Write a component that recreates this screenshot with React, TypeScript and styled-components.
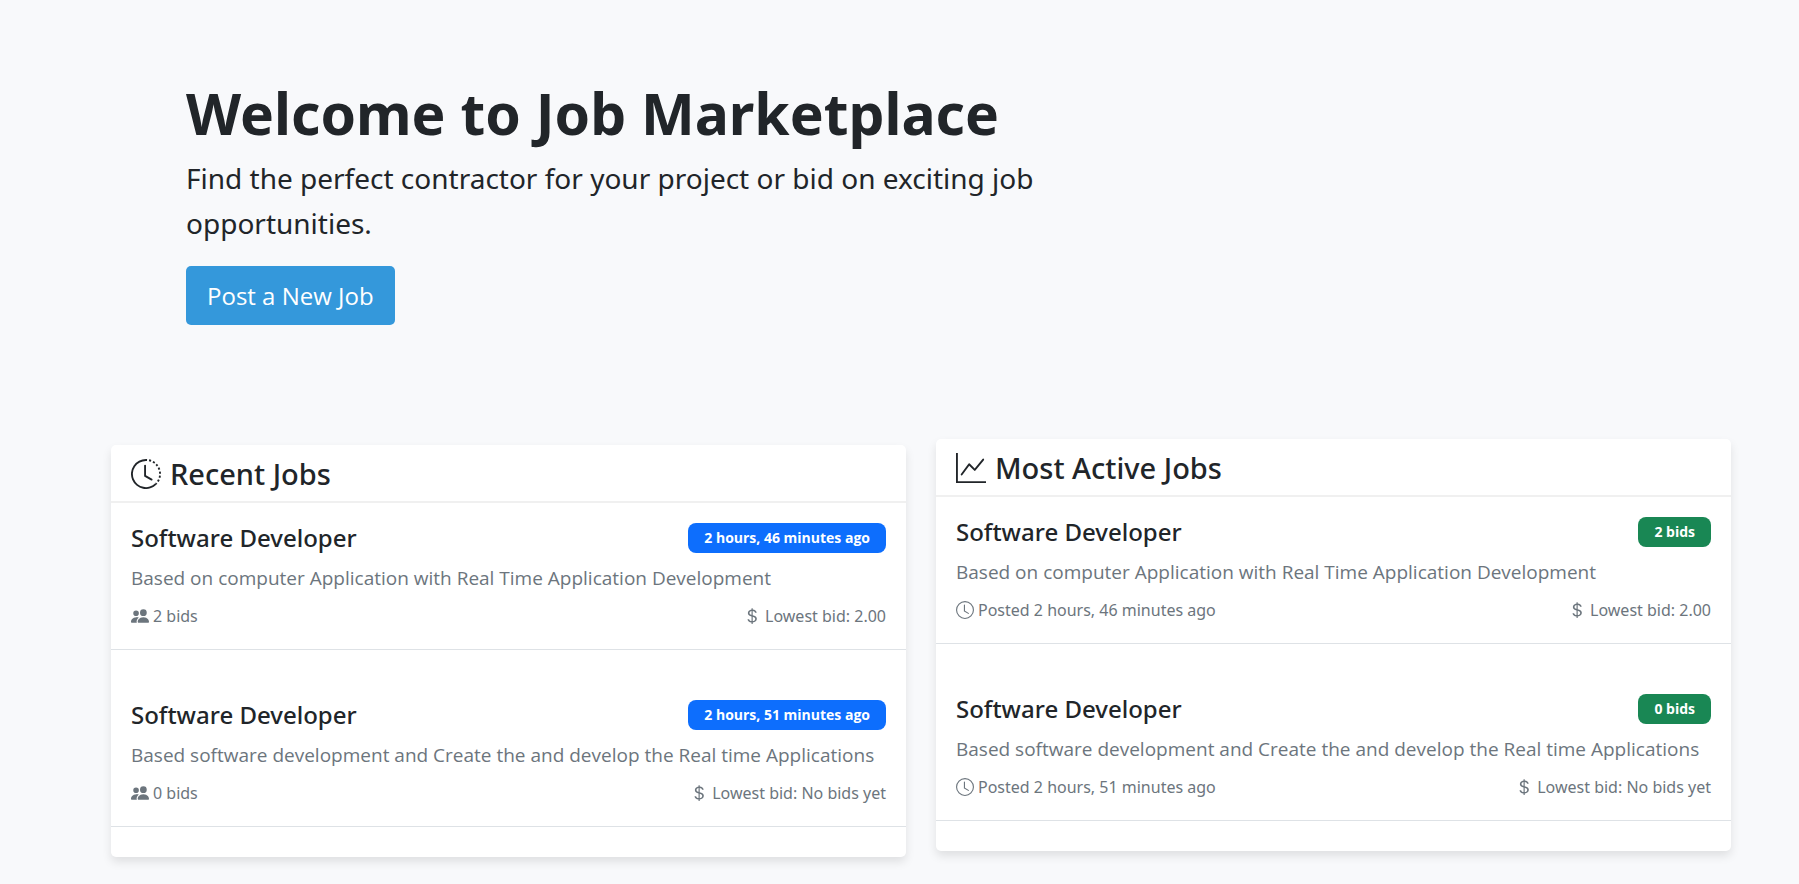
import React from 'react';
import styled, { createGlobalStyle } from 'styled-components';
import {
  BsClock,
  BsClockHistory,
  BsCurrencyDollar,
  BsGraphUp,
  BsPeopleFill,
} from 'react-icons/bs';

const displayFont = "'Noto Sans', 'Open Sans', sans-serif";

const GlobalStyle = createGlobalStyle`
  *, *::before, *::after { box-sizing: border-box; }

  body {
    margin: 0;
    background: #f8f9fb;
    color: #212529;
    font-family: 'Open Sans', 'Noto Sans', sans-serif;
    font-size: 19px;
    line-height: 30px;
  }
`;

const Page = styled.main`
  padding: 0 68px 24px 111px;
`;

const Hero = styled.header`
  padding: 76px 75px 120px;
`;

const HeroTitle = styled.h1`
  margin: 0 0 6px;
  font-family: ${displayFont};
  font-size: 57px;
  font-weight: 700;
  line-height: 74px;
`;

const Lead = styled.p`
  max-width: 960px;
  margin: 0 0 20px;
  font-family: ${displayFont};
  font-size: 28px;
  line-height: 45px;
`;

const PrimaryButton = styled.button`
  display: block;
  padding: 11px 21px;
  border: 0;
  border-radius: 5px;
  background: #3498db;
  color: #fff;
  font-family: inherit;
  font-size: 24px;
  line-height: 37px;
  cursor: pointer;
`;

const Columns = styled.div`
  display: grid;
  grid-template-columns: repeat(auto-fit, minmax(480px, 1fr));
  align-items: start;
  gap: 30px;
`;

const Card = styled.section<{ $raised?: boolean }>`
  border-radius: 5px;
  background: #fff;
  box-shadow: 0 5px 10px rgba(0, 0, 0, 0.1);
  transform: ${({ $raised }) => ($raised ? 'translateY(-6px)' : 'none')};
`;

const CardHeader = styled.h2`
  display: flex;
  align-items: center;
  gap: 9px;
  margin: 0;
  padding: 11px 20px 9px;
  border-bottom: 2px solid #f0f0f0;
  font-family: ${displayFont};
  font-size: 29px;
  font-weight: 500;
  line-height: 36px;
`;

const JobList = styled.ul`
  margin: 0;
  padding: 0;
  list-style: none;
`;

const JobItem = styled.li`
  display: flex;
  flex-direction: column;
  gap: 10px;
  margin-bottom: 30px;
  padding: 20px;
  border-bottom: 1px solid #dee2e6;
`;

const JobTop = styled.div`
  display: flex;
  align-items: center;
  justify-content: space-between;
`;

const JobTitle = styled.h3`
  margin: 0;
  font-family: ${displayFont};
  font-size: 24px;
  font-weight: 500;
  line-height: 30px;
`;

const Badge = styled.span<{ $tone: string }>`
  padding: 0 16px;
  border-radius: 8px;
  background: ${({ $tone }) => $tone};
  color: #fff;
  font-size: 14px;
  font-weight: 700;
  line-height: 30px;
`;

const Description = styled.p`
  margin: 0;
  color: #6c757d;
`;

const Meta = styled.div`
  display: flex;
  justify-content: space-between;
  color: #6c757d;
  font-family: ${displayFont};
  font-size: 16px;
  line-height: 26px;
`;

const MetaEntry = styled.span`
  display: flex;
  align-items: center;
  gap: 4px;
`;

interface Job {
  title: string;
  description: string;
  age: string;
  bids: string;
  lowest: string;
}

const jobs: Job[] = [
  {
    title: 'Software Developer',
    description: 'Based on computer Application with Real Time Application Development',
    age: '2 hours, 46 minutes ago',
    bids: '2 bids',
    lowest: '2.00',
  },
  {
    title: 'Software Developer',
    description: 'Based software development and Create the and develop the Real time Applications',
    age: '2 hours, 51 minutes ago',
    bids: '0 bids',
    lowest: 'No bids yet',
  },
];

function JobRow({ job, active }: { job: Job; active?: boolean }) {
  return (
    <JobItem>
      <JobTop>
        <JobTitle>{job.title}</JobTitle>
        <Badge $tone={active ? '#198754' : '#0d6efd'}>{active ? job.bids : job.age}</Badge>
      </JobTop>
      <Description>{job.description}</Description>
      <Meta>
        <MetaEntry>
          {active ? <BsClock size={18} /> : <BsPeopleFill size={18} />}
          {active ? `Posted ${job.age}` : job.bids}
        </MetaEntry>
        <MetaEntry>
          <BsCurrencyDollar size={18} />
          Lowest bid: {job.lowest}
        </MetaEntry>
      </Meta>
    </JobItem>
  );
}

export default function App() {
  return (
    <>
      <GlobalStyle />
      <Page>
        <Hero>
          <HeroTitle>Welcome to Job Marketplace</HeroTitle>
          <Lead>Find the perfect contractor for your project or bid on exciting job opportunities.</Lead>
          <PrimaryButton type="button">Post a New Job</PrimaryButton>
        </Hero>
        <Columns>
          <Card>
            <CardHeader>
              <BsClockHistory size={30} />
              Recent Jobs
            </CardHeader>
            <JobList>
              {jobs.map((job) => (
                <JobRow key={job.age} job={job} />
              ))}
            </JobList>
          </Card>
          <Card $raised>
            <CardHeader>
              <BsGraphUp size={30} />
              Most Active Jobs
            </CardHeader>
            <JobList>
              {jobs.map((job) => (
                <JobRow key={job.age} job={job} active />
              ))}
            </JobList>
          </Card>
        </Columns>
      </Page>
    </>
  );
}
